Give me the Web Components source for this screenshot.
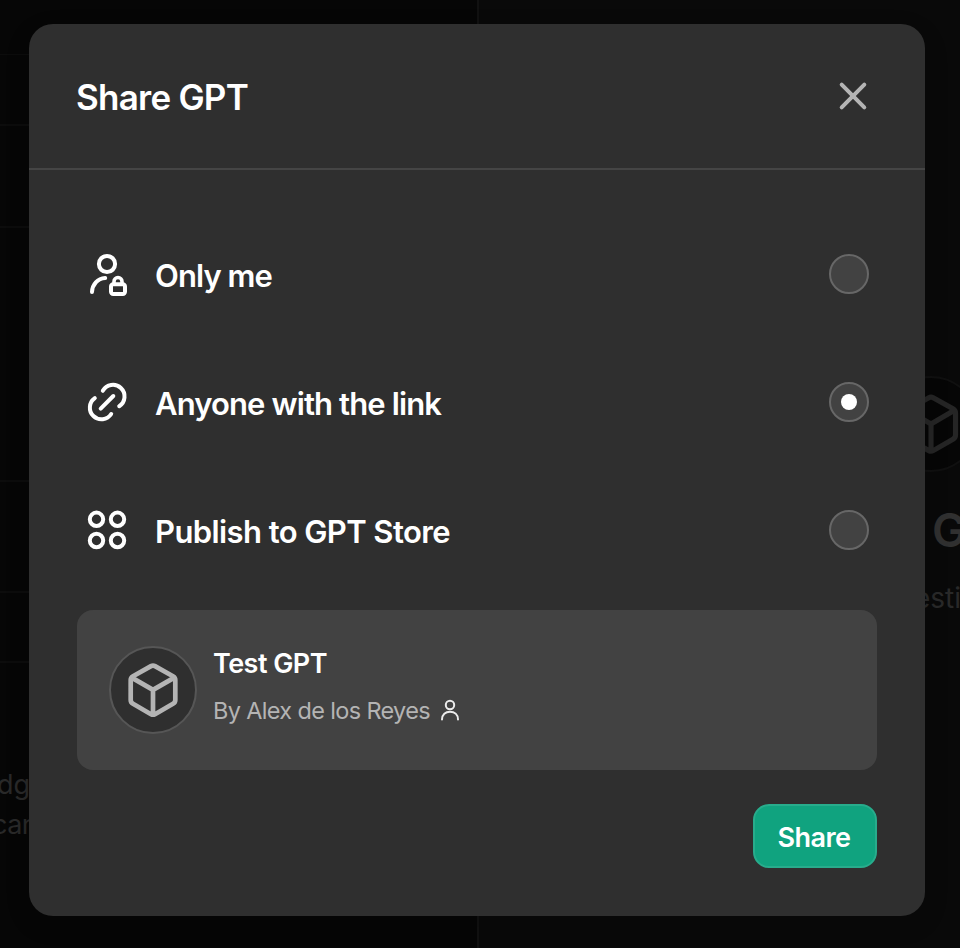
<!DOCTYPE html>
<html lang="en">
<head>
<meta charset="utf-8">
<title>Share GPT</title>
<style>
html,body{margin:0;height:100%;overflow:hidden;background:#060606}
body{font-family:Inter,"Liberation Sans",sans-serif;color:#fff}
</style>
</head>
<body>
<share-page></share-page>
<script>
const define=(name,html,setup)=>customElements.define(name,class extends HTMLElement{
  connectedCallback(){
    if(this.shadowRoot)return;
    this.attachShadow({mode:'open'}).innerHTML=html;
    if(setup)setup(this,this.shadowRoot);
  }
});

// Text whose tracking is set so that the line fills the given width.
define('fit-text',`<style>:host{display:block;white-space:nowrap;line-height:1.2}span{display:inline-block}</style><span><slot></slot></span>`,(el,root)=>{
  const s=root.querySelector('span'),w=+el.getAttribute('width'),n=el.textContent.length;
  s.style.letterSpacing=((w-s.getBoundingClientRect().width)/n)+'px';
});

const icons={
  lock:['0 0 48 48',4,'<circle cx="24" cy="14" r="8.100"/><path d="M9 42C9.300 34.500 14.500 28.500 22.200 28.100"/><rect x="28" y="34.200" width="14" height="9.700" rx="2.200"/><path d="M31 34V31.500a4 4 0 0 1 8 0V34" stroke-width="3.600"/>'],
  link:['0 0 48 48',4,'<path d="M19.800 12.800A11.600 11.600 0 1 1 36.200 28.200M11.800 20.200A11.600 11.600 0 1 0 28.200 36M17.700 30.600 30.300 18"/>'],
  grid:['0 0 48 48',4,'<circle cx="13.500" cy="13.300" r="6.700"/><circle cx="34.500" cy="13.300" r="6.700"/><circle cx="13.500" cy="34.500" r="6.700"/><circle cx="34.500" cy="34.500" r="6.700"/>'],
  cube:['0 0 60 60',4.7,'<path d="M28 6.100Q30 5 32 6.100L50 16.200Q52.300 17.500 52.300 20V40Q52.300 42.500 50 43.800L32 54.200Q30 55.300 28 54.200L10 43.800Q7.700 42.500 7.700 40V20Q7.700 17.500 10 16.200ZM8.700 17.600 30 29.900 51.300 17.600M30 29.900V54.500"/>'],
  user:['0 0 24 24',2,'<circle cx="12" cy="7" r="4.200"/><path d="M4 21.500C4 16.500 7.500 13.700 12 13.700S20 16.500 20 21.500"/>'],
  close:['0 0 32 32',4,'<path d="M4.700 4.700 27.300 27.300M27.300 4.700 4.700 27.300"/>']
};
define('line-icon',`<style>:host{display:block;flex:none}svg{display:block;width:100%;height:100%;fill:none;stroke:currentColor;stroke-linecap:round;stroke-linejoin:round}</style><svg></svg>`,(el,root)=>{
  const [box,w,d]=icons[el.getAttribute('name')],svg=root.querySelector('svg');
  svg.setAttribute('viewBox',box);svg.setAttribute('stroke-width',w);svg.innerHTML=d;
});

define('gpt-avatar',`<style>:host{display:grid;place-items:center;box-sizing:border-box;border:2px solid #565656;border-radius:50%;width:88px;height:88px;background:#2f2f2f;color:#b4b4b4;flex:none}line-icon{width:var(--glyph,60px);height:var(--glyph,60px)}</style><line-icon name="cube"></line-icon>`);

define('share-option',`<style>
:host{display:flex;align-items:center;height:128px;padding:0 8px 0 6px}
line-icon{width:48px;height:48px}
fit-text{font-size:31px;font-weight:580;margin:3px auto 0 24px}
i{display:grid;place-items:center;box-sizing:border-box;width:40px;height:40px;border:2px solid #676767;border-radius:50%;background:#424242}
:host([checked]) i::after{content:"";width:16px;height:16px;border-radius:50%;background:#fff}
</style><i></i>`,(el,root)=>{
  const dot=root.querySelector('i');
  const icon=document.createElement('line-icon');icon.setAttribute('name',el.getAttribute('icon'));
  const text=document.createElement('fit-text');text.setAttribute('width',el.getAttribute('width'));text.textContent=el.getAttribute('label');
  root.insertBefore(icon,dot);root.insertBefore(text,dot);
});

define('gpt-card',`<style>
:host{display:flex;box-sizing:border-box;height:160px;padding:36px 32px;gap:16px;border-radius:16px;background:#424242}
.name{font-size:27px;font-weight:580;margin-top:2px}
.by{display:flex;align-items:center;gap:8px;margin-top:16px;color:#b4b4b4;font-size:23.500px}
.by fit-text{margin-top:1px}
line-icon{width:24px;height:24px;color:#ececec;margin-bottom:2px}
</style><gpt-avatar></gpt-avatar><div><fit-text class="name" width="114">Test GPT</fit-text><div class="by"><fit-text width="217">By Alex de los Reyes</fit-text><line-icon name="user"></line-icon></div></div>`);

define('green-button',`<style>
:host{display:block}
button{display:grid;place-items:center;box-sizing:border-box;width:124px;height:64px;padding:4px 2px 0 0;border:2px solid #28ac8c;border-radius:16px;background:#10a37f;color:#fff;font:580 27px Inter,"Liberation Sans",sans-serif}
</style><button><fit-text width="73">Share</fit-text></button>`);

define('share-dialog',`<style>
:host{display:flex;flex-direction:column;box-sizing:border-box;width:896px;height:892px;border-radius:24px;background:#2f2f2f;overflow:hidden}
header{display:flex;justify-content:space-between;align-items:center;box-sizing:border-box;height:146px;padding:0 56px 0 47px;border-bottom:2px solid #454545}
header fit-text{font-size:35px;font-weight:580;margin-top:2px}
header line-icon{width:32px;height:32px;color:#b4b4b4}
main{display:flex;flex-direction:column;padding:40px 48px 0}
gpt-card{margin-top:16px}
footer{display:flex;justify-content:flex-end;padding:34px 48px 0}
</style>
<header><fit-text width="172">Share GPT</fit-text><line-icon name="close"></line-icon></header>
<main>
<share-option icon="lock" label="Only me" width="117"></share-option>
<share-option icon="link" label="Anyone with the link" width="286" checked></share-option>
<share-option icon="grid" label="Publish to GPT Store" width="295"></share-option>
<gpt-card></gpt-card>
</main>
<footer><green-button></green-button></footer>`);

// The dimmed editor that lies behind the dialog.
define('dim-editor',`<style>
:host{position:absolute;inset:0;display:grid;grid-template-columns:477px 1fr;overflow:hidden;color:#292929}
.left{background:#060606}
.right{background:#090909;border-left:2px solid #111}
hr{position:absolute;left:0;width:477px;height:2px;margin:0;border:0;background:#0c0c0c}
span{position:absolute;white-space:nowrap;line-height:1}
gpt-avatar{position:absolute;left:883px;top:376px;width:96px;height:96px;background:#060606;border-color:#101010;color:#252525;--glyph:66px}
</style><div class="left"></div><div class="right"></div>
<hr style="top:54px;height:1px"><hr style="top:124px"><hr style="top:226px"><hr style="top:480px"><hr style="top:591px"><hr style="top:661px">
<span style="left:-3px;top:771px;font-size:27px">dg</span><span style="left:-8px;top:811px;font-size:27px;letter-spacing:-.500px">can</span>
<gpt-avatar></gpt-avatar>
<span style="left:932px;top:507px;font-size:46px;font-weight:600;color:#303030">G</span>
<span style="left:914px;top:584px;font-size:28px">esti</span>`);

define('share-page',`<style>
:host{position:relative;display:flex;box-sizing:border-box;width:960px;height:948px;padding:24px 35px 32px 29px;overflow:hidden}
share-dialog{position:relative;box-shadow:0 8px 24px rgba(0,0,0,.15)}
</style><dim-editor></dim-editor><share-dialog></share-dialog>`);
</script>
</body>
</html>
